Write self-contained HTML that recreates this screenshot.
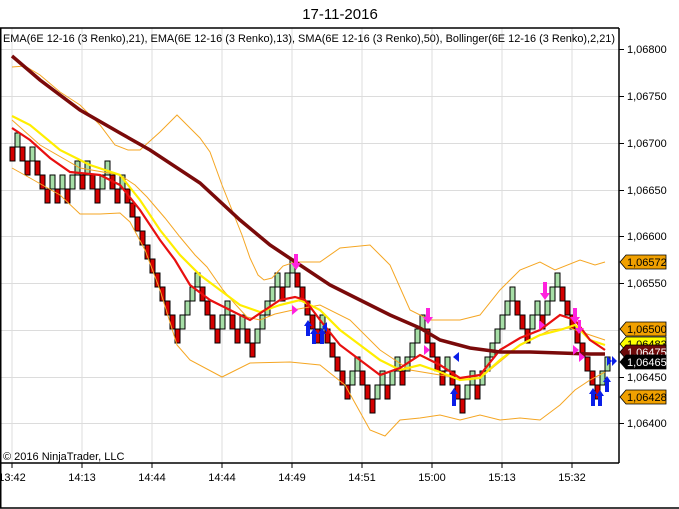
<!DOCTYPE html>
<html><head><meta charset="utf-8"><style>
html,body{margin:0;padding:0;background:#fff;}
svg{display:block;font-family:"Liberation Sans",sans-serif;}
.r{fill:#d40000;stroke:#000;stroke-width:1}
.g{fill:#a6dea6;stroke:#000;stroke-width:1}
.t{font-size:11px;fill:#000}
</style></head><body>
<svg width="679" height="509" viewBox="0 0 679 509" xmlns="http://www.w3.org/2000/svg">
<rect width="679" height="509" fill="#fff"/>
<text x="340" y="19" text-anchor="middle" font-size="15" fill="#000">17-11-2016</text>
<g stroke="#dcdcdc" stroke-width="1">
<line x1="12" y1="28" x2="12" y2="463"/><line x1="82" y1="28" x2="82" y2="463"/><line x1="152" y1="28" x2="152" y2="463"/><line x1="222" y1="28" x2="222" y2="463"/><line x1="292" y1="28" x2="292" y2="463"/><line x1="362" y1="28" x2="362" y2="463"/><line x1="432" y1="28" x2="432" y2="463"/><line x1="502" y1="28" x2="502" y2="463"/><line x1="572" y1="28" x2="572" y2="463"/>
<line x1="0" y1="49.5" x2="619" y2="49.5"/><line x1="0" y1="96.5" x2="619" y2="96.5"/><line x1="0" y1="143.5" x2="619" y2="143.5"/><line x1="0" y1="190.5" x2="619" y2="190.5"/><line x1="0" y1="236.5" x2="619" y2="236.5"/><line x1="0" y1="283.5" x2="619" y2="283.5"/><line x1="0" y1="330.5" x2="619" y2="330.5"/><line x1="0" y1="377.5" x2="619" y2="377.5"/><line x1="0" y1="423.5" x2="619" y2="423.5"/>
</g>
<text x="3" y="42" font-size="11" fill="#000" textLength="612" lengthAdjust="spacingAndGlyphs">EMA(6E 12-16 (3 Renko),21), EMA(6E 12-16 (3 Renko),13), SMA(6E 12-16 (3 Renko),50), Bollinger(6E 12-16 (3 Renko),2,21)</text>
<g>
<rect class="r" x="10" y="147" width="5" height="14"/><rect class="g" x="15" y="133" width="5" height="14"/><rect class="r" x="20" y="147" width="5" height="14"/><rect class="r" x="25" y="161" width="5" height="14"/><rect class="g" x="30" y="147" width="5" height="14"/><rect class="r" x="35" y="161" width="5" height="14"/><rect class="r" x="40" y="175" width="5" height="14"/><rect class="r" x="45" y="189" width="5" height="14"/><rect class="g" x="50" y="175" width="5" height="14"/><rect class="r" x="55" y="189" width="5" height="14"/><rect class="g" x="60" y="175" width="5" height="14"/><rect class="r" x="65" y="189" width="5" height="14"/><rect class="g" x="70" y="175" width="5" height="14"/><rect class="g" x="75" y="161" width="5" height="14"/><rect class="r" x="80" y="175" width="5" height="14"/><rect class="g" x="85" y="161" width="5" height="14"/><rect class="r" x="90" y="175" width="5" height="14"/><rect class="r" x="95" y="189" width="5" height="14"/><rect class="g" x="100" y="175" width="5" height="14"/><rect class="g" x="105" y="161" width="5" height="14"/><rect class="r" x="110" y="175" width="5" height="14"/><rect class="r" x="115" y="189" width="5" height="14"/><rect class="g" x="120" y="175" width="5" height="14"/><rect class="r" x="125" y="189" width="5" height="14"/><rect class="r" x="130" y="203" width="5" height="14"/><rect class="r" x="135" y="217" width="5" height="14"/><rect class="r" x="140" y="231" width="5" height="14"/><rect class="r" x="145" y="245" width="5" height="14"/><rect class="r" x="150" y="259" width="5" height="14"/><rect class="r" x="155" y="273" width="5" height="14"/><rect class="r" x="160" y="287" width="5" height="14"/><rect class="r" x="165" y="301" width="5" height="14"/><rect class="r" x="170" y="315" width="5" height="14"/><rect class="r" x="175" y="329" width="5" height="14"/><rect class="g" x="180" y="315" width="5" height="14"/><rect class="g" x="185" y="301" width="5" height="14"/><rect class="g" x="190" y="287" width="5" height="14"/><rect class="g" x="195" y="273" width="5" height="14"/><rect class="r" x="200" y="287" width="5" height="14"/><rect class="r" x="205" y="301" width="5" height="14"/><rect class="r" x="210" y="315" width="5" height="14"/><rect class="r" x="215" y="329" width="5" height="14"/><rect class="g" x="220" y="315" width="5" height="14"/><rect class="g" x="225" y="301" width="5" height="14"/><rect class="r" x="230" y="315" width="5" height="14"/><rect class="r" x="235" y="329" width="5" height="14"/><rect class="g" x="240" y="315" width="5" height="14"/><rect class="r" x="245" y="329" width="5" height="14"/><rect class="r" x="250" y="343" width="5" height="14"/><rect class="g" x="255" y="329" width="5" height="14"/><rect class="g" x="260" y="315" width="5" height="14"/><rect class="g" x="265" y="301" width="5" height="14"/><rect class="g" x="270" y="287" width="5" height="14"/><rect class="g" x="275" y="273" width="5" height="14"/><rect class="r" x="280" y="287" width="5" height="14"/><rect class="g" x="285" y="273" width="5" height="14"/><rect class="g" x="290" y="259" width="5" height="14"/><rect class="r" x="295" y="273" width="5" height="14"/><rect class="r" x="300" y="287" width="5" height="14"/><rect class="r" x="305" y="301" width="5" height="14"/><rect class="r" x="310" y="315" width="5" height="14"/><rect class="r" x="315" y="329" width="5" height="14"/><rect class="g" x="320" y="315" width="5" height="14"/><rect class="r" x="325" y="329" width="5" height="14"/><rect class="r" x="330" y="343" width="5" height="14"/><rect class="r" x="335" y="357" width="5" height="14"/><rect class="r" x="340" y="371" width="5" height="14"/><rect class="r" x="345" y="385" width="5" height="14"/><rect class="g" x="350" y="371" width="5" height="14"/><rect class="g" x="355" y="357" width="5" height="14"/><rect class="r" x="360" y="371" width="5" height="14"/><rect class="r" x="365" y="385" width="5" height="14"/><rect class="r" x="370" y="399" width="5" height="14"/><rect class="g" x="375" y="385" width="5" height="14"/><rect class="g" x="380" y="371" width="5" height="14"/><rect class="r" x="385" y="385" width="5" height="14"/><rect class="g" x="390" y="371" width="5" height="14"/><rect class="g" x="395" y="357" width="5" height="14"/><rect class="r" x="400" y="371" width="5" height="14"/><rect class="g" x="405" y="357" width="5" height="14"/><rect class="g" x="410" y="343" width="5" height="14"/><rect class="g" x="415" y="329" width="5" height="14"/><rect class="g" x="420" y="315" width="5" height="14"/><rect class="r" x="425" y="329" width="5" height="14"/><rect class="r" x="430" y="343" width="5" height="14"/><rect class="r" x="435" y="357" width="5" height="14"/><rect class="r" x="440" y="371" width="5" height="14"/><rect class="g" x="445" y="357" width="5" height="14"/><rect class="r" x="450" y="371" width="5" height="14"/><rect class="r" x="455" y="385" width="5" height="14"/><rect class="r" x="460" y="399" width="5" height="14"/><rect class="g" x="465" y="385" width="5" height="14"/><rect class="g" x="470" y="371" width="5" height="14"/><rect class="r" x="475" y="385" width="5" height="14"/><rect class="g" x="480" y="371" width="5" height="14"/><rect class="g" x="485" y="357" width="5" height="14"/><rect class="g" x="490" y="343" width="5" height="14"/><rect class="g" x="495" y="329" width="5" height="14"/><rect class="g" x="500" y="315" width="5" height="14"/><rect class="g" x="505" y="301" width="5" height="14"/><rect class="g" x="510" y="287" width="5" height="14"/><rect class="r" x="515" y="301" width="5" height="14"/><rect class="r" x="520" y="315" width="5" height="14"/><rect class="r" x="525" y="329" width="5" height="14"/><rect class="g" x="530" y="315" width="5" height="14"/><rect class="g" x="535" y="301" width="5" height="14"/><rect class="r" x="540" y="315" width="5" height="14"/><rect class="g" x="545" y="301" width="5" height="14"/><rect class="g" x="550" y="287" width="5" height="14"/><rect class="g" x="555" y="273" width="5" height="14"/><rect class="r" x="560" y="287" width="5" height="14"/><rect class="r" x="565" y="301" width="5" height="14"/><rect class="r" x="570" y="315" width="5" height="14"/><rect class="r" x="575" y="329" width="5" height="14"/><rect class="r" x="580" y="343" width="5" height="14"/><rect class="r" x="585" y="357" width="5" height="14"/><rect class="r" x="590" y="371" width="5" height="14"/><rect class="r" x="595" y="385" width="5" height="14"/><rect class="g" x="600" y="371" width="5" height="14"/><rect class="g" x="605" y="357" width="5" height="14"/>
</g>
<g fill="none" stroke="#f5a623" stroke-width="1">
<polyline points="12,67 25,66 40,75 60,92 80,105 100,125 115,145 128,150 140,150 160,132 177,115 190,128 200,138 210,152 222,185 232,210 242,235 250,258 258,275 264,280 272,278 283,266 295,262 320,262 340,248 370,245 390,265 410,310 430,320 460,320 480,315 500,290 520,270 540,262 555,270 580,260 595,265 605,262"/>
<polyline points="12,120 40,145 80,168 120,175 135,185 147,197 165,218 180,237 195,255 207,267 223,290 236,305 247,317 260,320 275,314 293,310 320,305 350,320 380,350 410,370 440,375 470,380 490,370 520,345 550,330 570,328 590,335 605,340"/>
<polyline points="12,168 30,178 60,195 80,214 100,214 120,213 130,222 145,250 160,290 177,345 190,360 222,377 250,363 290,362 320,365 345,385 370,430 385,436 400,420 420,418 440,415 460,420 480,415 500,420 520,418 540,420 560,405 575,390 590,380 605,372"/>
</g>
<polyline fill="none" stroke="#ffee00" stroke-width="2.2" points="12,116 30,125 60,150 90,165 120,175 140,200 160,230 180,255 200,275 220,290 240,305 260,312 280,305 300,300 320,310 340,330 360,345 380,360 400,370 420,365 440,372 460,380 480,378 500,360 520,345 540,335 560,330 575,325 590,340 605,345"/>
<polyline fill="none" stroke="#e81010" stroke-width="2.2" points="12,128 30,140 50,158 70,172 100,175 120,185 140,210 160,240 175,260 190,285 210,300 230,310 250,320 265,310 280,300 295,297 305,300 320,320 340,345 360,360 380,375 400,368 420,355 440,365 460,378 480,375 500,350 520,338 540,330 560,315 575,320 590,340 605,350"/>
<polyline fill="none" stroke="#7a0a0a" stroke-width="3.5" points="12,56 40,80 80,110 120,133 150,150 200,183 240,220 270,245 300,265 330,285 360,300 390,315 420,328 440,340 470,348 500,352 530,352 560,353 590,354 605,354"/>
<g fill="#ff22dd">
<rect x="294" y="254" width="4" height="10"/><polygon points="291,263 301,263 296,270"/>
<rect x="426" y="308" width="4" height="10"/><polygon points="423,317 433,317 428,324"/>
<rect x="543" y="282" width="4" height="12"/><polygon points="540,293 550,293 545,300"/>
<rect x="573" y="308" width="4" height="10"/><polygon points="570,317 580,317 575,324"/>
<rect x="578" y="320" width="3" height="10"/><polygon points="575,328 584,328 579,334"/>
<polygon points="292,305 298,310 292,315"/><polygon points="424,345 430,350 424,355"/><polygon points="539,320 545,325 539,330"/><polygon points="573,345 579,350 573,355"/><polygon points="579,352 585,357 579,362"/>
</g>
<g fill="#0a1ee8">
<polygon points="308,320 312,326 310,326 310,336 306,336 306,326 304,326"/>
<polygon points="314,328 318,334 316,334 316,344 312,344 312,334 310,334"/>
<polygon points="322,328 326,334 324,334 324,344 320,344 320,334 318,334"/>
<polygon points="454,388 458,394 456,394 456,406 452,406 452,394 450,394"/>
<polygon points="593,388 597,394 595,394 595,406 591,406 591,394 589,394"/>
<polygon points="600,390 604,396 602,396 602,406 598,406 598,396 596,396"/>
<polygon points="607,376 611,382 609,382 609,392 605,392 605,382 603,382"/>
<polygon points="459,352 453,357 459,362"/><polygon points="327,322 322,327 327,332"/><polygon points="607,356 612,361 607,366"/><polygon points="612,356 617,361 612,366"/>
</g>
<g stroke="#000" stroke-width="1.5" fill="none">
<line x1="0" y1="28" x2="619" y2="28"/>
<line x1="0.75" y1="28" x2="0.75" y2="508"/>
<line x1="619" y1="28" x2="619" y2="463"/>
<line x1="0" y1="463" x2="619" y2="463"/>
<line x1="0" y1="508" x2="679" y2="508"/>
</g>
<g stroke="#000" stroke-width="1">
<line x1="619" y1="49.5" x2="624" y2="49.5"/><line x1="619" y1="96.5" x2="624" y2="96.5"/><line x1="619" y1="143.5" x2="624" y2="143.5"/><line x1="619" y1="190.5" x2="624" y2="190.5"/><line x1="619" y1="236.5" x2="624" y2="236.5"/><line x1="619" y1="283.5" x2="624" y2="283.5"/><line x1="619" y1="377.5" x2="624" y2="377.5"/><line x1="619" y1="423.5" x2="624" y2="423.5"/>
<line x1="12" y1="463" x2="12" y2="468"/><line x1="82" y1="463" x2="82" y2="468"/><line x1="152" y1="463" x2="152" y2="468"/><line x1="222" y1="463" x2="222" y2="468"/><line x1="292" y1="463" x2="292" y2="468"/><line x1="362" y1="463" x2="362" y2="468"/><line x1="432" y1="463" x2="432" y2="468"/><line x1="502" y1="463" x2="502" y2="468"/><line x1="572" y1="463" x2="572" y2="468"/>
</g>
<g>
<text class="t" x="627" y="53">1,06800</text><text class="t" x="627" y="100">1,06750</text><text class="t" x="627" y="147">1,06700</text><text class="t" x="627" y="194">1,06650</text><text class="t" x="627" y="240">1,06600</text><text class="t" x="627" y="287">1,06550</text><text class="t" x="627" y="381">1,06450</text><text class="t" x="627" y="427">1,06400</text>
</g>
<g font-size="11">
<polygon points="620,262 626,255 666,255 666,269 626,269" fill="#f0a000" stroke="#000" stroke-width="0.8"/><text x="627" y="266">1,06572</text>
<polygon points="620,329 626,322 666,322 666,336 626,336" fill="#f0a000" stroke="#000" stroke-width="0.8"/><text x="627" y="333">1,06500</text>
<polygon points="620,344 626,337 666,337 666,351 626,351" fill="#ffff00" stroke="#000" stroke-width="0.8"/><text x="627" y="348">1,06483</text>
<polygon points="620,352 626,345 666,345 666,359 626,359" fill="#6b0a0a" stroke="#000" stroke-width="0.8"/><text x="627" y="356" fill="#fff">1,06475</text>
<polygon points="620,362 626,355 666,355 666,369 626,369" fill="#000" stroke="#000" stroke-width="0.8"/><text x="627" y="366" fill="#fff">1,06465</text>
<polygon points="620,397 626,390 666,390 666,404 626,404" fill="#f0a000" stroke="#000" stroke-width="0.8"/><text x="627" y="401">1,06428</text>
</g>
<text x="3" y="460" font-size="11" fill="#000">© 2016 NinjaTrader, LLC</text>
<g font-size="11" text-anchor="middle" fill="#000">
<text x="12" y="481">13:42</text><text x="82" y="481">14:13</text><text x="152" y="481">14:44</text><text x="222" y="481">14:44</text><text x="292" y="481">14:49</text><text x="362" y="481">14:51</text><text x="432" y="481">15:00</text><text x="502" y="481">15:13</text><text x="572" y="481">15:32</text>
</g>
</svg>
</body></html>
